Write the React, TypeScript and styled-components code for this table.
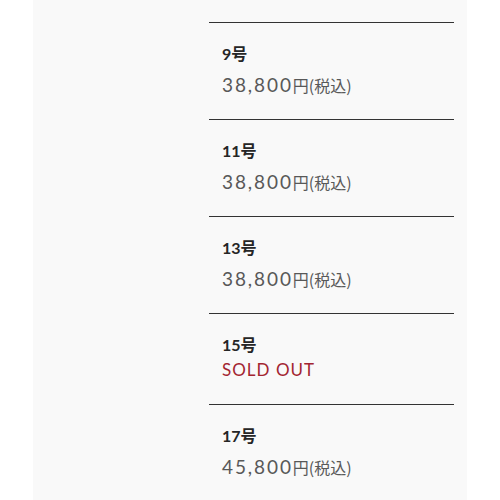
import React from "react";
import styled, { createGlobalStyle } from "styled-components";

const Global = createGlobalStyle`
  html, body { margin: 0; padding: 0; background: #ffffff; }
  body { overflow: hidden; }
`;

const Page = styled.div`
  height: 500px;
  padding: 0 33px;
  overflow: hidden;
`;

const Panel = styled.div`
  background: #f9f9f9;
  height: 100%;
  padding: 22px 13px 0 176px;
  box-sizing: border-box;
  overflow: hidden;
`;

const List = styled.ul`
  list-style: none;
  margin: 0;
  padding: 0;
`;

const Row = styled.li<{ $soldOut?: boolean }>`
  display: flex;
  flex-direction: column;
  gap: ${(p) => (p.$soldOut ? "2px" : "5px")};
  border-top: 1px solid #333;
  padding: 19px 13px ${(p) => (p.$soldOut ? "23px" : "20px")};
  height: ${(p) => (p.$soldOut ? "91px" : "97px")};
  box-sizing: border-box;
`;

const Size = styled.span`
  font-family: "Lato", "Noto Sans CJK JP", sans-serif;
  font-weight: 700;
  font-size: 16px;
  line-height: 24px;
  color: #262626;
`;

const Price = styled.span`
  display: flex;
  align-items: baseline;
  height: 28px;
  line-height: 28px;
  color: #585858;
`;

const Amount = styled.span`
  font-family: "Lato", sans-serif;
  font-weight: 400;
  font-size: 19px;
  letter-spacing: 0.1em;
`;

const Tax = styled.span`
  font-family: "Noto Sans CJK JP", sans-serif;
  font-size: 16px;
`;

const SoldOut = styled.span`
  font-family: "Lato", sans-serif;
  font-weight: 400;
  font-size: 17px;
  line-height: 22px;
  letter-spacing: 0.06em;
  color: #a32531;
`;

type Item = { size: string; price?: string };

const items: Item[] = [
  { size: "9号", price: "38,800" },
  { size: "11号", price: "38,800" },
  { size: "13号", price: "38,800" },
  { size: "15号" },
  { size: "17号", price: "45,800" },
];

export default function App() {
  return (
    <>
      <Global />
      <Page>
        <Panel>
          <List>
            {items.map((it) => (
              <Row key={it.size} $soldOut={!it.price}>
                <Size>{it.size}</Size>
                {it.price ? (
                  <Price>
                    <Amount>{it.price}</Amount>
                    <Tax>円(税込)</Tax>
                  </Price>
                ) : (
                  <SoldOut>SOLD OUT</SoldOut>
                )}
              </Row>
            ))}
          </List>
        </Panel>
      </Page>
    </>
  );
}
